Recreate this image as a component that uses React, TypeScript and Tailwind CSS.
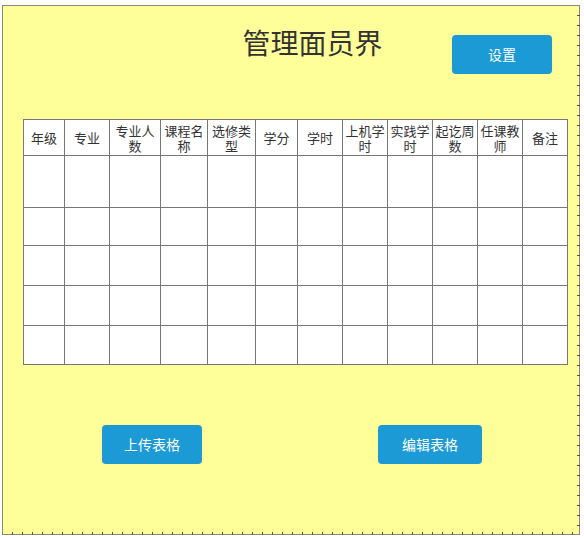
const COLUMNS: { label: string; width: number }[] = [
  { label: '年级', width: 41 },
  { label: '专业', width: 45 },
  { label: '专业人数', width: 51 },
  { label: '课程名称', width: 47 },
  { label: '选修类型', width: 48 },
  { label: '学分', width: 42 },
  { label: '学时', width: 45 },
  { label: '上机学时', width: 45 },
  { label: '实践学时', width: 45 },
  { label: '起讫周数', width: 45 },
  { label: '任课教师', width: 45 },
  { label: '备注', width: 45 },
];

const ROW_HEIGHTS = [52, 38, 40, 40, 39];

function BlueButton({ label, className }: { label: string; className: string }) {
  return (
    <button
      className={`bg-[#1b9ad6] text-white text-[14px] rounded-[4px] flex items-center justify-center ${className}`}
    >
      {label}
    </button>
  );
}

export default function App() {
  return (
    <div
      className="w-[584px] h-[538px] bg-white pl-[2px] pt-[5px]"
      style={{ fontFamily: '"Noto Sans CJK SC", "Noto Sans", sans-serif' }}
    >
      <div className="relative w-[578px] h-[530px] bg-[#ffff99] border border-[#8a8a7a]">
        {/* ruler ticks on right and bottom edges */}
        <div className="absolute -right-[1px] top-0 w-[3px] h-full bg-[repeating-linear-gradient(to_bottom,transparent_0px,transparent_9px,#555_9px,#555_10px)]" />
        <div className="absolute left-0 -bottom-[1px] h-[3px] w-full bg-[repeating-linear-gradient(to_right,transparent_0px,transparent_9px,#555_9px,#555_10px)]" />

        <div className="flex items-start h-[113px]">
          <div className="w-[449px] flex justify-center pt-[17px] pl-[170px]">
            <h1 className="text-[28px] leading-[38px] text-[#333] whitespace-nowrap">管理面员界</h1>
          </div>
          <BlueButton label="设置" className="mt-[29px] w-[100px] h-[39px]" />
        </div>

        <div className="pl-[20px]">
          <table className="border-collapse bg-white text-[13px] leading-[15px] text-[#333] table-fixed">
            <thead>
              <tr className="h-[36px]">
                {COLUMNS.map(col => (
                  <th
                    key={col.label}
                    className="border border-[#777] font-normal text-center px-[1px] align-middle"
                    style={{ width: col.width }}
                  >
                    {col.label}
                  </th>
                ))}
              </tr>
            </thead>
            <tbody>
              {ROW_HEIGHTS.map((h, i) => (
                <tr key={i} style={{ height: h }}>
                  {COLUMNS.map(col => (
                    <td key={col.label} className="border border-[#777]" />
                  ))}
                </tr>
              ))}
            </tbody>
          </table>
        </div>

        <div className="flex mt-[60px]">
          <BlueButton label="上传表格" className="ml-[99px] w-[100px] h-[39px]" />
          <BlueButton label="编辑表格" className="ml-[176px] w-[104px] h-[39px]" />
        </div>
      </div>
    </div>
  );
}
